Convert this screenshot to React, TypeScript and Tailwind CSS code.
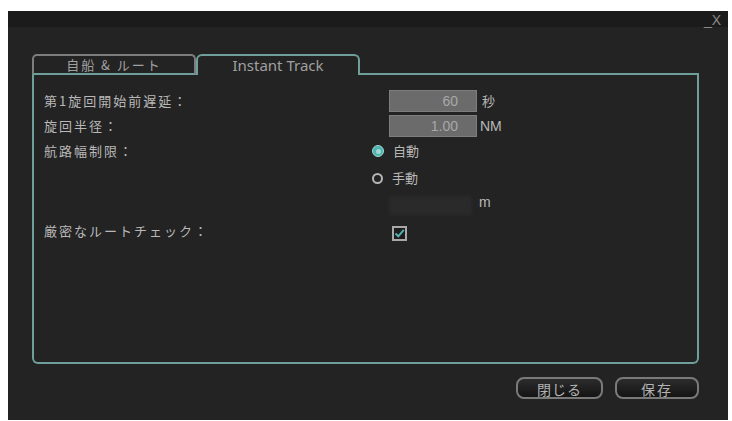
import React from 'react';

const JP = "font-['Noto_Sans_CJK_JP','Noto_Sans',sans-serif]";

function Radio({ checked }: { checked: boolean }) {
  return checked ? (
    <span className="w-[12px] h-[12px] rounded-full bg-[#4fb3b0] border border-[#9fd8d4] flex items-center justify-center">
      <span className="w-[5px] h-[5px] rounded-full bg-[#9fd8d4]" />
    </span>
  ) : (
    <span className="w-[11px] h-[11px] rounded-full border-2 border-[#b5b5b5]" />
  );
}

function Row({
  label,
  className = '',
  children,
}: {
  label?: string;
  className?: string;
  children?: React.ReactNode;
}) {
  return (
    <div className={`flex items-center ${className}`}>
      <div className="w-[345px] shrink-0 text-[13px] tracking-[2px] text-[#b8b8b8]">{label}</div>
      {children}
    </div>
  );
}

export default function App() {
  return (
    <div className={`w-[732px] h-[421px] bg-white pt-[11px] pl-[8px] ${JP}`}>
      <div className="w-[720px] h-[409px] bg-[#232323] flex flex-col">
        {/* Title bar */}
        <div className="h-[16px] bg-[#1b1b1b] flex justify-end items-start pr-[7px]">
          <span className="text-[14px] leading-[18px] text-[#8a8a8a] font-['Liberation_Sans',sans-serif]">_X</span>
        </div>

        <div className="pl-[24px] pt-[27px]">
          {/* Tabs */}
          <div className="w-[667px] h-[21px] flex">
            <div className="w-[164px] h-full border-2 border-[#7d7d7d] border-b-[#6e9f9a] rounded-t-[5px] flex items-center justify-center text-[13px] tracking-[2px] text-[#a0a0a0]">
              自船 &amp; ルート
            </div>
            <div className="w-[164px] h-full border-2 border-b-0 border-[#6e9f9a] rounded-t-[6px] flex items-center justify-center text-[15px] text-[#a0a0a0] font-['Noto_Sans',sans-serif]">
              Instant Track
            </div>
            <div className="flex-1 h-full border-b-2 border-[#6e9f9a]" />
          </div>

          {/* Panel */}
          <div className="w-[667px] h-[289px] border-2 border-t-0 border-[#6e9f9a] rounded-b-[6px] pl-[10px] pt-[15px]">
            <Row label="第1旋回開始前遅延：" className="h-[22px]">
              <div className="w-[88px] h-full bg-[#6b6b6b] border border-[#7e7e7e] flex items-center justify-end pr-[18px] text-[14px] text-[#a8a8a8] font-['Liberation_Sans',sans-serif]">
                60
              </div>
              <span className="ml-[5px] text-[13px] text-[#b8b8b8]">秒</span>
            </Row>
            <Row label="旋回半径：" className="h-[22px] mt-[3px]">
              <div className="w-[88px] h-full bg-[#6b6b6b] border border-[#7e7e7e] flex items-center justify-end pr-[18px] text-[14px] text-[#a8a8a8] font-['Liberation_Sans',sans-serif]">
                1.00
              </div>
              <span className="ml-[3px] text-[14px] text-[#b8b8b8] font-['Liberation_Sans',sans-serif]">NM</span>
            </Row>
            <Row label="航路幅制限：" className="h-[20px] mt-[4px]">
              <div className="-ml-[17px] flex items-center gap-[9px] text-[13px] text-[#b8b8b8]">
                <Radio checked />
                自動
              </div>
            </Row>
            <Row className="h-[20px] mt-[7px]">
              <div className="-ml-[17px] flex items-center gap-[9px] text-[13px] text-[#b8b8b8]">
                <Radio checked={false} />
                手動
              </div>
            </Row>
            <Row className="h-[19px] mt-[8px]">
              <div className="w-[83px] h-full bg-[#2a2a2a] blur-[1.5px]" />
              <span className="ml-[7px] -mt-[6px] text-[14px] text-[#b8b8b8] font-['Liberation_Sans',sans-serif]">m</span>
            </Row>
            <Row label="厳密なルートチェック：" className="h-[20px] mt-[6px]">
              <div className="ml-[3px] mt-[4px] w-[15px] h-[15px] border-2 border-[#a8a8a8] bg-[#1c1c1c] flex items-center justify-center">
                <svg width="11" height="11" viewBox="0 0 11 11" fill="none">
                  <path d="M1.5 5.5 L4.3 8.3 L9.8 1.8" stroke="#4fb3b0" strokeWidth="2" />
                </svg>
              </div>
            </Row>
          </div>

          {/* Buttons */}
          <div className="w-[667px] flex justify-end gap-[12px] mt-[13px]">
            <button className="w-[87px] h-[22px] rounded-[8px] border-2 border-[#7a7a7a] bg-gradient-to-b from-[#2c2c2c] to-[#141414] text-[14px] tracking-[1px] text-[#b3b3b3]">
              閉じる
            </button>
            <button className="w-[84px] h-[22px] rounded-[8px] border-2 border-[#7a7a7a] bg-gradient-to-b from-[#2c2c2c] to-[#141414] text-[14px] tracking-[2px] text-[#b3b3b3]">
              保存
            </button>
          </div>
        </div>
      </div>
    </div>
  );
}
